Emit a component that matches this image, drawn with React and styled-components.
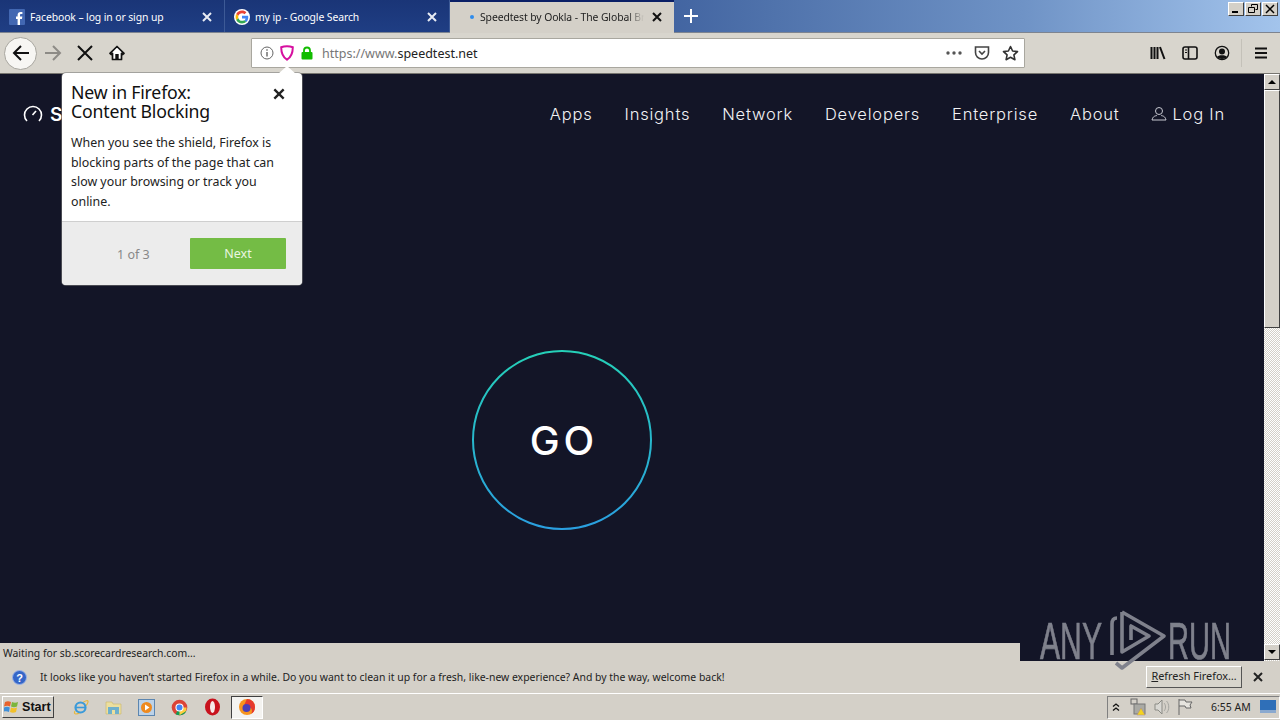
import React from 'react';
import styled, { createGlobalStyle } from 'styled-components';

const Global = createGlobalStyle`
  html, body { margin: 0; padding: 0; background: #d4d0c8; overflow: hidden; }
  * { box-sizing: border-box; }
`;
const UI = `"Noto Sans", "Liberation Sans", sans-serif`;
const Window = styled.div`
  position: relative; width: 1280px; height: 720px; overflow: hidden;
  display: flex; flex-direction: column; font-family: ${UI}; color: #111;
`;
const TabStrip = styled.div`
  height: 33px; flex: none; display: flex; align-items: stretch;
  background: linear-gradient(90deg, #1c3a80 0%, #25458a 35%, #4f72ab 60%, #6f93c6 80%, #a3c4ec 100%);
  border-bottom: 1px solid #7d8490;
`;
const Tab = styled.div`
  width: ${p => p.$w}px; flex: none; display: flex; align-items: center; padding-left: ${p => p.$pad}px;
  padding-top: ${p => p.$active ? 0 : 2}px; padding-bottom: ${p => p.$active ? 2 : 0}px;
  color: ${p => p.$active ? '#222' : '#fff'}; font-size: 10.4px; letter-spacing: -0.1px;
  background: ${p => p.$active ? '#d4d0c8' : 'linear-gradient(180deg,#1a3577,#1f3e84)'};
  border-right: ${p => p.$active ? 0 : '1px solid #3d5a96'};
  border-top: ${p => p.$active ? '2px solid #0a1f66' : 0};
  height: ${p => p.$active ? '33px' : '32px'};
`;
const TabTitle = styled.span`
  flex: 1; margin-left: ${p => p.$gap}px; white-space: nowrap; overflow: hidden;
  ${p => p.$fade && `-webkit-mask-image: linear-gradient(90deg,#000 90%,transparent);`}
`;
const TabClose = styled.svg`width: 12px; height: 12px; margin-left: ${p => p.$ml || 0}px; margin-right: ${p => p.$mr}px; flex: none;`;
const LoadDot = styled.i`width: 4px; height: 4px; border-radius: 50%; background: #2f8cec; flex: none;`;
const NewTab = styled.svg`width: 16px; height: 16px; margin: 8px 0 0 9px; flex: none;`;
const Spacer = styled.div`flex: 1;`;
const Controls = styled.div`display: flex; gap: 1px; margin: 2px 2px 0 0;`;
const CtlBtn = styled.div`
  width: 16px; height: 14px; background: #d4d0c8; display: flex; align-items: center; justify-content: center;
  border: 1px solid; border-color: #fff #404040 #404040 #fff;
`;
const Toolbar = styled.div`
  height: 41px; flex: none; display: flex; align-items: center; background: #d8d5cd;
  border-bottom: 1px solid #77756f; padding-left: 4px;
`;
const BackBtn = styled.div`
  width: 33px; height: 33px; border-radius: 50%; background: #f7f6f3; border: 1px solid #a8a69f;
  display: flex; align-items: center; justify-content: center; flex: none;
`;
const ToolIcon = styled.svg`
  width: ${p => p.$s || 18}px; height: ${p => p.$h || p.$s || 18}px; flex: none;
  margin-left: ${p => p.$ml || 0}px; margin-right: ${p => p.$mr || 0}px;
`;
const UrlBar = styled.div`
  width: 774px; height: 30px; margin-left: 126px; background: #fff; border: 1px solid #a9a79f; flex: none;
  display: flex; align-items: center; padding-left: 8px; border-radius: 1px;
`;
const UrlText = styled.div`
  flex: 1; margin-left: 8px; font-size: 12.5px; color: #777; white-space: nowrap;
  b { font-weight: 400; color: #222; }
`;
const Sep = styled.i`width: 1px; height: 28px; background: #c4c1b9; margin-left: 11px;`;
const Content = styled.div`flex: 1; display: flex; position: relative; min-height: 0;`;
const Page = styled.main`flex: 1; background: #131527; display: flex; flex-direction: column; min-width: 0;`;
const Header = styled.header`height: 80px; flex: none; display: flex; align-items: center; padding: 0 39px 0 23px;`;
const Brand = styled.div`display: flex; align-items: center; gap: 7px; color: #fff; font: 600 19px Inter, sans-serif;`;
const Nav = styled.nav`margin-left: auto; display: flex; align-items: center; gap: 32px;`;
const NavLink = styled.a`
  color: #f2f2f4; font: 300 16.5px Inter, sans-serif; letter-spacing: 0.8px; display: flex; align-items: center; gap: 5px;
`;
const Stage = styled.div`display: flex; justify-content: center; padding: 196px 140px 0 0;`;
const Go = styled.div`
  position: relative; width: 180px; height: 180px; display: flex; align-items: center; justify-content: center;
  color: #fff; font: 500 40px Inter, sans-serif; letter-spacing: 4px; padding-left: 4px;
`;
const Ring = styled.svg`position: absolute; inset: 0;`;
const Scrollbar = styled.div`
  width: 16px; flex: none; display: flex; flex-direction: column;
  background-color: #f2f0ec;
  background-image: repeating-conic-gradient(#d4d0c8 0 25%, #fff 0 50%); background-size: 2px 2px;
`;
const ScrollBtn = styled.div`
  height: 16px; flex: none; background: #d4d0c8; border: 1px solid; border-color: #fff #404040 #404040 #fff;
  display: flex; align-items: center; justify-content: center; margin-bottom: ${p => p.$mb || 0}px;
  &::after { content: ''; border-left: 4px solid transparent; border-right: 4px solid transparent;
    ${p => p.$up ? 'border-bottom: 4px solid #000;' : 'border-top: 4px solid #000;'} }
`;
const Thumb = styled.div`height: 238px; flex: none; background: #d4d0c8; border: 1px solid; border-color: #fff #404040 #404040 #fff;`;
const Status = styled.div`
  position: absolute; left: 0; bottom: 0; width: 1020px; height: 18px; background: #d4d0c8;
  font-size: 10.4px; line-height: 20px; padding-left: 3px; color: #222;
`;
const Notice = styled.div`
  height: 32px; flex: none; background: #d4d0c8; display: flex; align-items: center; padding-left: 12px;
  font-size: 10.43px; color: #222;
`;
const NoticeText = styled.span`margin-left: 13px;`;
const RefreshBtn = styled.div`
  margin-left: auto; width: 96px; height: 22px; background: #d8d5cd; display: flex; align-items: center; justify-content: center;
  font-size: 10.9px; padding-bottom: 3px; border: 1px solid; border-color: #fff #555 #555 #fff;
  u { text-decoration: underline; }
`;
const NoticeClose = styled.svg`width: 12px; height: 12px; margin: 0 16px 0 10px; flex: none;`;
const Taskbar = styled.footer`
  height: 27px; flex: none; background: #d4d0c8; border-top: 1px solid #fff; display: flex; align-items: center; padding-left: 2px;
`;
const Start = styled.div`
  width: 52px; height: 22px; display: flex; align-items: center; gap: 1px; padding-left: 1px; font: 700 12.6px "Liberation Sans", sans-serif; flex: none;
  border: 1px solid; border-color: #fff #404040 #404040 #fff; background: #d4d0c8;
`;
const Quick = styled.div`display: flex; align-items: center; gap: 16px; margin-left: 18px;`;
const Active = styled.div`
  width: 32px; height: 23px; background: #f4f3f0; border: 1px solid; border-color: #404040 #fff #fff #404040; display: flex; align-items: center; justify-content: center;
  margin-left: -6px;
`;
const Tray = styled.div`
  margin-left: auto; width: 173px; height: 23px; display: flex; align-items: center; padding-left: 4px;
  border: 1px solid; border-color: #808080 #fff #fff #808080; font-size: 10.5px; color: #222;
`;
const TrayIcon = styled.svg`flex: none; margin-left: ${p => p.$push ? 'auto' : `${p.$ml || 0}px`}; margin-right: ${p => p.$mr || 0}px;`;
const Clock = styled.span`margin-left: 18px; white-space: nowrap;`;
const Popup = styled.section`
  position: absolute; left: 62px; top: 73px; width: 240px; height: 212px; background: #fff; border-radius: 4px;
  box-shadow: 0 0 0 1px rgba(120,120,120,.55); display: flex; flex-direction: column; overflow: visible;
`;
const Arrow = styled.i`
  position: absolute; left: 216px; top: -7px; width: 0; height: 0;
  border-left: 9px solid transparent; border-right: 9px solid transparent; border-bottom: 8px solid #fff;
`;
const PopBody = styled.div`flex: 1; padding: 10px 9px 0; position: relative;`;
const PopTitle = styled.h2`margin: 0; font: 400 17.7px/19px "Noto Sans", sans-serif; color: #111; letter-spacing: -0.2px;`;
const PopText = styled.p`margin: 12px 0 0; max-width: 208px; font-size: 12.4px; line-height: 19.7px; color: #222;`;
const PopClose = styled.svg`position: absolute; right: 16px; top: 14px; width: 14px; height: 14px;`;
const PopFoot = styled.div`
  height: 64px; flex: none; background: #ececec; border-top: 1px solid #cfcfcf; border-radius: 0 0 4px 4px;
  display: flex; align-items: center; padding: 0 16px 0 55px; justify-content: space-between;
`;
const Count = styled.span`font-size: 12.5px; color: #888; margin-top: 1px;`;
const NextBtn = styled.div`
  width: 96px; height: 31px; background: #74bc45; color: #eaf6e0; border-radius: 1px; font-size: 12.5px;
  display: flex; align-items: center; justify-content: center;
`;
const Mark = styled.div`
  position: absolute; left: 1040px; top: 610px; width: 192px; height: 62px; pointer-events: none; color: #7f818c;
  display: flex; align-items: center; justify-content: space-between;
`;
const MarkWord = styled.span`
  font: 400 52px/62px "Liberation Sans", sans-serif; display: block; width: ${p => p.$w}px;
  transform: scaleX(${p => p.$x}); transform-origin: left center; white-space: nowrap;
  -webkit-text-stroke: 0.7px #7f818c;
`;
const MarkLogo = styled.svg`position: absolute; left: 68px; top: 0; width: 60px; height: 62px;`;

const X = ({ c = '#fff', w = 2 }) => <path d="M2 2 10 10M10 2 2 10" stroke={c} strokeWidth={w} fill="none" />;

const Gicon = () => (
  <ToolIcon $s={16} viewBox="0 0 48 48">
    <circle cx="24" cy="24" r="24" fill="#fff" />
    <path fill="#EA4335" d="M24 12.5c3 0 5.6 1 7.6 3l5.6-5.6C33.8 6.7 29.300 4.700 24 4.700c-7.600 0-14.100 4.300-17.300 10.600l6.600 5.100C14.800 15.800 19 12.500 24 12.500z"/>
    <path fill="#4285F4" d="M42.800 24.500c0-1.400-.1-2.700-.4-4H24v7.700h10.700c-.5 2.500-1.900 4.600-4 6l6.300 4.900c3.700-3.400 5.800-8.500 5.800-14.600z"/>
    <path fill="#FBBC05" d="M13.300 27.700c-.4-1.200-.6-2.400-.6-3.700s.2-2.500.6-3.700l-6.600-5.100C5.400 17.800 4.700 20.800 4.700 24s.7 6.200 2 8.800z"/>
    <path fill="#34A853" d="M24 43.300c5.200 0 9.600-1.700 12.800-4.700l-6.300-4.900c-1.700 1.200-3.900 1.900-6.500 1.900-5 0-9.200-3.300-10.700-7.900l-6.600 5.100c3.200 6.200 9.700 10.500 17.300 10.500z"/>
  </ToolIcon>
);

export default function App() {
  return (
    <Window>
      <Global />
      <TabStrip>
        <Tab $w={225} $pad={9}>
          <ToolIcon $s={16} viewBox="0 0 16 16">
            <rect width="16" height="16" rx="1" fill="#4267b2" />
            <path d="M11 16v-6h2l.3-2.400H11V6.200c0-.7.2-1.100 1.100-1.100h1.300V3c-.3 0-1-.1-1.800-.1-1.800 0-3 1.100-3 3.100v1.600H7V10h1.600v6z" fill="#fff" />
          </ToolIcon>
          <TabTitle $gap={5}>Facebook – log in or sign up</TabTitle>
          <TabClose $mr={11} viewBox="0 0 12 12"><X c="#e8ecf4" /></TabClose>
        </Tab>
        <Tab $w={225} $pad={9}>
          <Gicon />
          <TabTitle $gap={5}>my ip - Google Search</TabTitle>
          <TabClose $mr={11} viewBox="0 0 12 12"><X c="#e8ecf4" /></TabClose>
        </Tab>
        <Tab $w={224} $pad={20} $active>
          <LoadDot />
          <TabTitle $gap={6} $fade>Speedtest by Ookla - The Global Broadband</TabTitle>
          <TabClose $ml={7} $mr={11} viewBox="0 0 12 12"><X c="#111" /></TabClose>
        </Tab>
        <NewTab viewBox="0 0 16 16"><path d="M8 1v14M1 8h14" stroke="#fff" strokeWidth="2" /></NewTab>
        <Spacer />
        <Controls>
          <CtlBtn><svg width="10" height="10"><rect x="1" y="7" width="6" height="2" fill="#000" /></svg></CtlBtn>
          <CtlBtn><svg width="10" height="10"><path d="M3.500 2.500V.5h6v5h-2M.5 3.500h6v5h-6z" fill="none" stroke="#000" /></svg></CtlBtn>
          <CtlBtn><svg width="10" height="10"><path d="M1 1 9 9M9 1 1 9" stroke="#000" strokeWidth="1.500" /></svg></CtlBtn>
        </Controls>
      </TabStrip>

      <Toolbar>
        <BackBtn>
          <svg width="18" height="18" viewBox="0 0 18 18"><path d="M17 9H2M9 2 2 9l7 7" fill="none" stroke="#111" strokeWidth="2" /></svg>
        </BackBtn>
        <ToolIcon $ml={7} $s={18} viewBox="0 0 18 18"><path d="M1 9h15M9 2l7 7-7 7" fill="none" stroke="#8d8b86" strokeWidth="2" /></ToolIcon>
        <ToolIcon $ml={15} $s={16} viewBox="0 0 16 16"><path d="M1 1 15 15M15 1 1 15" stroke="#111" strokeWidth="2" /></ToolIcon>
        <ToolIcon $ml={16} $s={16} viewBox="0 0 16 16">
          <path d="M8 1.500 1 8.300l1.200 1.200 1.300-1.200V14.500h9V8.300l1.300 1.200L15 8.300z" fill="#fff" stroke="#111" strokeWidth="1.700" strokeLinejoin="round" />
          <rect x="6.300" y="9" width="3.400" height="5.500" fill="#111" />
        </ToolIcon>
        <UrlBar>
          <ToolIcon $s={14} viewBox="0 0 14 14">
            <circle cx="7" cy="7" r="6" fill="none" stroke="#666" /><path d="M7 6v4.500M7 3.200v1.500" stroke="#666" strokeWidth="1.400" />
          </ToolIcon>
          <ToolIcon $ml={6} $s={14} $h={16} viewBox="0 0 14 16">
            <path d="M7 1.200c2 0 4 .3 5.800 1 0 5.500-1.500 9.800-5.800 12.500C2.700 12 1.200 7.700 1.200 2.200 3 1.500 5 1.200 7 1.200z" fill="none" stroke="#d60f9f" strokeWidth="2" />
          </ToolIcon>
          <ToolIcon $ml={6} $s={14} viewBox="0 0 14 14">
            <path d="M4 6.500V4.500a3 3 0 0 1 6 0v2" fill="none" stroke="#12bc00" strokeWidth="1.800" /><rect x="1.500" y="6" width="11" height="7.500" rx="1" fill="#12bc00" />
          </ToolIcon>
          <UrlText>https://www.<b>speedtest.net</b></UrlText>
          <ToolIcon $s={18} viewBox="0 0 18 18"><g fill="#555"><circle cx="3" cy="9" r="1.700" /><circle cx="9" cy="9" r="1.700" /><circle cx="15" cy="9" r="1.700" /></g></ToolIcon>
          <ToolIcon $ml={11} $s={16} viewBox="0 0 16 16">
            <path d="M1.500 2h13v5.500a6.500 6.500 0 0 1-13 0z" fill="none" stroke="#444" strokeWidth="1.600" /><path d="M5 6l3 3 3-3" fill="none" stroke="#444" strokeWidth="1.600" />
          </ToolIcon>
          <ToolIcon $ml={12} $mr={5} $s={17} viewBox="0 0 17 17">
            <path d="M8.500 1.500 10.600 6l4.900.6-3.600 3.300 1 4.800-4.400-2.400-4.400 2.400 1-4.800L1.500 6.600 6.400 6z" fill="none" stroke="#333" strokeWidth="1.600" strokeLinejoin="round" />
          </ToolIcon>
        </UrlBar>
        <ToolIcon $ml={125} $s={16} viewBox="0 0 16 16">
          <path d="M1.500 2v12M4.500 2v12M7.500 2v12" stroke="#111" strokeWidth="2" /><path d="M10 2l4.500 12" stroke="#111" strokeWidth="2" />
        </ToolIcon>
        <ToolIcon $ml={16} $s={16} viewBox="0 0 16 16">
          <rect x="1" y="2" width="14" height="12" rx="2" fill="none" stroke="#111" strokeWidth="1.600" /><path d="M6.500 2v12" stroke="#111" strokeWidth="1.600" /><path d="M3 5h2M3 7.500h2" stroke="#111" />
        </ToolIcon>
        <ToolIcon $ml={16} $s={16} viewBox="0 0 16 16">
          <circle cx="8" cy="8" r="6.700" fill="none" stroke="#111" strokeWidth="1.300" /><circle cx="8" cy="6.500" r="3" fill="#111" /><path d="M3 12c1-2.500 9-2.500 10 0-2 2.500-8 2.500-10 0z" fill="#111" />
        </ToolIcon>
        <Sep />
        <ToolIcon $ml={12} $s={14} viewBox="0 0 14 14"><path d="M1 2.500h12M1 7h12M1 11.500h12" stroke="#111" strokeWidth="2" /></ToolIcon>
      </Toolbar>

      <Content>
        <Page>
          <Header>
            <Brand>
              <svg width="20" height="20" viewBox="0 0 20 20"><path d="M4 17a8.500 8.500 0 1 1 12 0" fill="none" stroke="#fff" strokeWidth="1.600" /><path d="M9.500 11 13 7" stroke="#fff" strokeWidth="1.600" /></svg>
              S
            </Brand>
            <Nav>
              <NavLink>Apps</NavLink>
              <NavLink>Insights</NavLink>
              <NavLink>Network</NavLink>
              <NavLink>Developers</NavLink>
              <NavLink>Enterprise</NavLink>
              <NavLink>About</NavLink>
              <NavLink>
                <svg width="16" height="16" viewBox="0 0 16 16"><circle cx="8" cy="5" r="3.500" fill="none" stroke="#c8c9d2" /><path d="M1 14c1-4 3-4 5-4.500M15 14c-1-4-3-4-5-4.500M1 14h14" fill="none" stroke="#c8c9d2" /></svg>
                Log In
              </NavLink>
            </Nav>
          </Header>
          <Stage>
            <Go>
              <Ring width="180" height="180" viewBox="0 0 180 180">
                <defs><linearGradient id="ring" x1="0" y1="0" x2="0" y2="1"><stop offset="0" stopColor="#25d0b8" /><stop offset="1" stopColor="#2a9fe0" /></linearGradient></defs>
                <circle cx="90" cy="90" r="89" fill="none" stroke="url(#ring)" strokeWidth="2" />
              </Ring>
              GO
            </Go>
          </Stage>
        </Page>
        <Scrollbar>
          <ScrollBtn $up />
          <Thumb />
          <Spacer />
          <ScrollBtn $mb={1} />
        </Scrollbar>
        <Status>Waiting for sb.scorecardresearch.com...</Status>
      </Content>

      <Notice>
        <ToolIcon $s={15} viewBox="0 0 15 15">
          <circle cx="7.500" cy="7.500" r="7" fill="#3566c8" stroke="#9db4e6" /><text x="7.500" y="11.500" textAnchor="middle" fontSize="11" fontWeight="700" fill="#fff" fontFamily="Liberation Sans">?</text>
        </ToolIcon>
        <NoticeText>It looks like you haven’t started Firefox in a while. Do you want to clean it up for a fresh, like-new experience? And by the way, welcome back!</NoticeText>
        <RefreshBtn><span><u>R</u>efresh Firefox…</span></RefreshBtn>
        <NoticeClose viewBox="0 0 12 12"><X c="#222" /></NoticeClose>
      </Notice>

      <Taskbar>
        <Start>
          <svg width="17" height="16" viewBox="0 0 17 16">
            <path d="M1 3c2-1 4-1 6 0L6 7.500c-2-1-3.500-1-6 0z" fill="#e8622c" /><path d="M8 3c2 1 4 1 6 0l-1 4.500c-2 1-4 1-6 0z" fill="#7bb53c" />
            <path d="M0 8.500c2-1 4-1 5.800 0L5 13c-2-1-4-1-6 0z" fill="#3f8fd8" /><path d="M7 8.500c2 1 4 1 6 0L12 13c-2 1-4 1-6 0z" fill="#f2c029" />
          </svg>
          Start
        </Start>
        <Quick>
          <svg width="17" height="17" viewBox="0 0 17 17"><path d="M3 12C1 16 5 15.500 8 13.500M11 3.500C13 2 16.500.500 16 3c-.2 1-1 2.500-2 3.500" fill="none" stroke="#e6b73c" strokeWidth="1.200" /><circle cx="8.500" cy="8.500" r="5" fill="none" stroke="#3a9ad9" strokeWidth="2.200" /><path d="M4 8.500h9" stroke="#3a9ad9" strokeWidth="1.600" /></svg>
          <svg width="17" height="17" viewBox="0 0 17 17"><path d="M1 3h6l1 2h8v10H1z" fill="#ecdf9e" stroke="#c9b76a" strokeWidth=".6" /><rect x="3" y="8" width="11" height="7" fill="#6fb0cc" /><path d="M7 15v-4h3v4" fill="#ecdf9e" /></svg>
          <svg width="17" height="17" viewBox="0 0 17 17"><rect x=".5" y=".5" width="16" height="16" fill="#bcd2e8" stroke="#5c86b0" /><circle cx="8.500" cy="8.500" r="5.500" fill="#ee8a1f" /><path d="M7 5.500 11.500 8.500 7 11.500z" fill="#fff" /></svg>
          <svg width="17" height="17" viewBox="0 0 48 48"><circle cx="24" cy="24" r="22" fill="#db4437" /><path d="M24 24 43 35A22 22 0 0 1 13 43z" fill="#0f9d58" /><path d="M24 24h20a22 22 0 0 1-3 11L24 46z" fill="#ffcd40" /><circle cx="24" cy="24" r="10" fill="#4285f4" stroke="#fff" strokeWidth="3" /></svg>
          <svg width="17" height="18" viewBox="0 0 17 18"><ellipse cx="8.500" cy="9" rx="7.500" ry="8.500" fill="#c8121d" /><ellipse cx="8.500" cy="9" rx="2.500" ry="6" fill="#f5e8e8" /></svg>
          <Active>
            <svg width="18" height="18" viewBox="0 0 18 18"><circle cx="9" cy="9" r="8" fill="#f7941e" /><path d="M9 1a8 8 0 0 1 8 8c0 4-2 6-4 7 2-3 1-6-2-7-3 0-4 2-4 3-1-1-2-4 2-11z" fill="#e6392e" /><circle cx="8.500" cy="10" r="4" fill="#4a3fb8" /></svg>
          </Active>
        </Quick>
        <Tray>
          <TrayIcon width="8" height="10" viewBox="0 0 8 10"><path d="M1 4.500 4 2l3 2.500M1 8.500 4 6l3 2.500" fill="none" stroke="#111" strokeWidth="1.300" /></TrayIcon>
          <TrayIcon $ml={9} width="18" height="18" viewBox="0 0 18 18"><rect x="2" y="1" width="6" height="5" fill="none" stroke="#666" /><rect x="5" y="6" width="11" height="10" fill="#a9a9a4" stroke="#777" /><path d="M12 10l4 7H8z" fill="#f4d31f" stroke="#a88" strokeWidth=".5" /></TrayIcon>
          <TrayIcon $ml={6} width="18" height="18" viewBox="0 0 18 18"><path d="M2 6h3l4-4v14l-4-4H2z" fill="#d9d8d3" stroke="#8b8b85" /><path d="M11 5c2 2 2 6 0 8M13.500 3c3 3 3 9 0 12" fill="none" stroke="#a5a5a0" /></TrayIcon>
          <TrayIcon $ml={6} width="16" height="18" viewBox="0 0 16 18"><path d="M2 1v16M2 2h6l1 2h6l-2 3 1 3H9L8 8H2" fill="#e6e4de" stroke="#666" /></TrayIcon>
          <Clock>6:55 AM</Clock>
          <TrayIcon $push $mr={3} width="16" height="14" viewBox="0 0 16 14"><rect width="16" height="12" fill="#2f6fb8" /><rect y="10" width="16" height="3" fill="#8aa9cf" /></TrayIcon>
        </Tray>
      </Taskbar>

      <Popup>
        <Arrow />
        <PopBody>
          <PopTitle>New in Firefox:<br />Content Blocking</PopTitle>
          <PopClose viewBox="0 0 12 12"><X c="#222" /></PopClose>
          <PopText>When you see the shield, Firefox is blocking parts of the page that can slow your browsing or track you online.</PopText>
        </PopBody>
        <PopFoot>
          <Count>1 of 3</Count>
          <NextBtn>Next</NextBtn>
        </PopFoot>
      </Popup>

      <Mark>
        <MarkWord $x={0.58} $w={64}>ANY</MarkWord>
        <MarkLogo viewBox="0 0 60 62">
          <path d="M9 8Q4 8 4 14V45M14 2 56 26 14 58 8 53M14 2V42L41 26 23 16V30" fill="none" stroke="#7f818c" strokeWidth="3.600" strokeLinejoin="round" />
        </MarkLogo>
        <MarkWord $x={0.56} $w={64}>RUN</MarkWord>
      </Mark>
    </Window>
  );
}
